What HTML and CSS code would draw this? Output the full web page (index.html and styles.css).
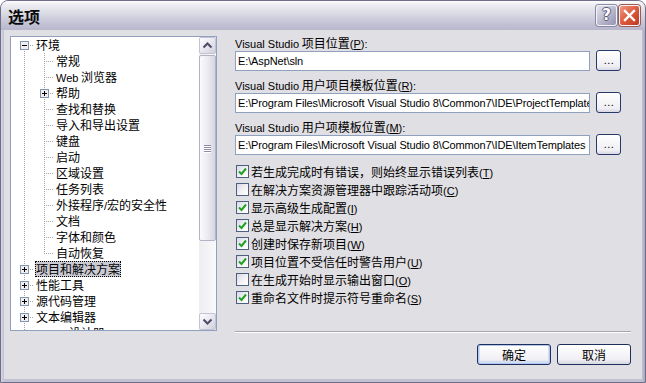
FILE: index.html
```html
<!DOCTYPE html>
<html lang="zh-CN">
<head>
<meta charset="utf-8">
<title>选项</title>
<link rel="stylesheet" href="styles.css">
</head>
<body>
<div class="window">
  <div class="titlebar">
    <span class="title">选项</span>
    <div class="caption-btns">
      <div class="cap-btn help"><span class="help-glyph">?</span></div>
      <div class="cap-btn close">
        <svg width="13" height="13" viewBox="0 0 13 13"><path d="M2 2L11 11M11 2L2 11" stroke="#fff" stroke-width="2.4" stroke-linecap="square"/></svg>
      </div>
    </div>
  </div>
  <div class="client">
    <div class="main">
      <div class="tree">
        <div class="tree-list">
          <div class="row"><span class="g g-first"><svg class="box" width="9" height="9" viewBox="0 0 9 9"><rect x=".5" y=".5" width="8" height="8" fill="#eeeef3" stroke="#8294ab"/><path d="M2 4.5h5" stroke="#000"/></svg></span><span class="lbl">环境</span></div>
          <div class="row"><span class="g g-line"></span><span class="g g-tee"></span><span class="lbl">常规</span></div>
          <div class="row"><span class="g g-line"></span><span class="g g-tee"></span><span class="lbl"><span class="lat">Web</span> 浏览器</span></div>
          <div class="row"><span class="g g-line"></span><span class="g g-tee"><svg class="box" width="9" height="9" viewBox="0 0 9 9"><rect x=".5" y=".5" width="8" height="8" fill="#eeeef3" stroke="#8294ab"/><path d="M2 4.5h5M4.5 2v5" stroke="#000"/></svg></span><span class="lbl">帮助</span></div>
          <div class="row"><span class="g g-line"></span><span class="g g-tee"></span><span class="lbl">查找和替换</span></div>
          <div class="row"><span class="g g-line"></span><span class="g g-tee"></span><span class="lbl">导入和导出设置</span></div>
          <div class="row"><span class="g g-line"></span><span class="g g-tee"></span><span class="lbl">键盘</span></div>
          <div class="row"><span class="g g-line"></span><span class="g g-tee"></span><span class="lbl">启动</span></div>
          <div class="row"><span class="g g-line"></span><span class="g g-tee"></span><span class="lbl">区域设置</span></div>
          <div class="row"><span class="g g-line"></span><span class="g g-tee"></span><span class="lbl">任务列表</span></div>
          <div class="row"><span class="g g-line"></span><span class="g g-tee"></span><span class="lbl">外接程序<span class="lat">/</span>宏的安全性</span></div>
          <div class="row"><span class="g g-line"></span><span class="g g-tee"></span><span class="lbl">文档</span></div>
          <div class="row"><span class="g g-line"></span><span class="g g-tee"></span><span class="lbl">字体和颜色</span></div>
          <div class="row"><span class="g g-line"></span><span class="g g-end"></span><span class="lbl">自动恢复</span></div>
          <div class="row"><span class="g g-tee"><svg class="box" width="9" height="9" viewBox="0 0 9 9"><rect x=".5" y=".5" width="8" height="8" fill="#eeeef3" stroke="#8294ab"/><path d="M2 4.5h5M4.5 2v5" stroke="#000"/></svg></span><span class="lbl selected">项目和解决方案</span></div>
          <div class="row"><span class="g g-tee"><svg class="box" width="9" height="9" viewBox="0 0 9 9"><rect x=".5" y=".5" width="8" height="8" fill="#eeeef3" stroke="#8294ab"/><path d="M2 4.5h5M4.5 2v5" stroke="#000"/></svg></span><span class="lbl">性能工具</span></div>
          <div class="row"><span class="g g-tee"><svg class="box" width="9" height="9" viewBox="0 0 9 9"><rect x=".5" y=".5" width="8" height="8" fill="#eeeef3" stroke="#8294ab"/><path d="M2 4.5h5M4.5 2v5" stroke="#000"/></svg></span><span class="lbl">源代码管理</span></div>
          <div class="row"><span class="g g-tee"><svg class="box" width="9" height="9" viewBox="0 0 9 9"><rect x=".5" y=".5" width="8" height="8" fill="#eeeef3" stroke="#8294ab"/><path d="M2 4.5h5M4.5 2v5" stroke="#000"/></svg></span><span class="lbl">文本编辑器</span></div>
          <div class="row"><span class="g g-tee"></span><span class="lbl"><span class="lat">HTML</span> 设计器</span></div>
        </div>
        <div class="vscroll">
          <div class="sb-btn"><svg width="15" height="15" viewBox="0 0 15 15"><path d="M3.5 9.5L7.5 5.5L11.5 9.5" fill="none" stroke="#4b4b68" stroke-width="2"/></svg></div>
          <div class="sb-track">
            <div class="sb-thumb"><div class="grip"><i></i><i></i><i></i><i></i></div></div>
          </div>
          <div class="sb-btn"><svg width="15" height="15" viewBox="0 0 15 15"><path d="M3.5 5.5L7.5 9.5L11.5 5.5" fill="none" stroke="#4b4b68" stroke-width="2"/></svg></div>
        </div>
      </div>
      <div class="panel">
        <div class="field-label"><span class="lat">Visual Studio</span> 项目位置<span class="lat">(<u>P</u>):</span></div>
        <div class="field-row"><div class="input lat">E:\AspNet\sln</div><div class="browse lat">...</div></div>
        <div class="field-label"><span class="lat">Visual Studio</span> 用户项目模板位置<span class="lat">(<u>R</u>):</span></div>
        <div class="field-row"><div class="input lat">E:\Program Files\Microsoft Visual Studio 8\Common7\IDE\ProjectTemplates</div><div class="browse lat">...</div></div>
        <div class="field-label"><span class="lat">Visual Studio</span> 用户项模板位置<span class="lat">(<u>M</u>):</span></div>
        <div class="field-row"><div class="input lat">E:\Program Files\Microsoft Visual Studio 8\Common7\IDE\ItemTemplates</div><div class="browse lat">...</div></div>
        <div class="checks">
          <div class="check"><span class="cb on"><svg width="11" height="11" viewBox="0 0 11 11"><path d="M2 5.5L4.5 8L9 2.5" fill="none" stroke="#21a121" stroke-width="2"/></svg></span><span>若生成完成时有错误，则始终显示错误列表<span class="lat">(<u>T</u>)</span></span></div>
          <div class="check"><span class="cb"></span><span>在解决方案资源管理器中跟踪活动项<span class="lat">(<u>C</u>)</span></span></div>
          <div class="check"><span class="cb on"><svg width="11" height="11" viewBox="0 0 11 11"><path d="M2 5.5L4.5 8L9 2.5" fill="none" stroke="#21a121" stroke-width="2"/></svg></span><span>显示高级生成配置<span class="lat">(<u>I</u>)</span></span></div>
          <div class="check"><span class="cb on"><svg width="11" height="11" viewBox="0 0 11 11"><path d="M2 5.5L4.5 8L9 2.5" fill="none" stroke="#21a121" stroke-width="2"/></svg></span><span>总是显示解决方案<span class="lat">(<u>H</u>)</span></span></div>
          <div class="check"><span class="cb on"><svg width="11" height="11" viewBox="0 0 11 11"><path d="M2 5.5L4.5 8L9 2.5" fill="none" stroke="#21a121" stroke-width="2"/></svg></span><span>创建时保存新项目<span class="lat">(<u>W</u>)</span></span></div>
          <div class="check"><span class="cb on"><svg width="11" height="11" viewBox="0 0 11 11"><path d="M2 5.5L4.5 8L9 2.5" fill="none" stroke="#21a121" stroke-width="2"/></svg></span><span>项目位置不受信任时警告用户<span class="lat">(<u>U</u>)</span></span></div>
          <div class="check"><span class="cb"></span><span>在生成开始时显示输出窗口<span class="lat">(<u>O</u>)</span></span></div>
          <div class="check"><span class="cb on"><svg width="11" height="11" viewBox="0 0 11 11"><path d="M2 5.5L4.5 8L9 2.5" fill="none" stroke="#21a121" stroke-width="2"/></svg></span><span>重命名文件时提示符号重命名<span class="lat">(<u>S</u>)</span></span></div>
        </div>
        <div class="separator"></div>
      </div>
    </div>
    <div class="footer">
      <div class="btn default">确定</div>
      <div class="btn">取消</div>
    </div>
  </div>
</div>
</body>
</html>
```

FILE: styles.css
```css
* { box-sizing: border-box; }
html, body { margin: 0; padding: 0; }
body {
  width: 646px;
  height: 383px;
  overflow: hidden;
  background: #ffffff;
  font-family: "Noto Sans CJK SC", "Liberation Sans", sans-serif;
  font-size: 12px;
  color: #000;
}
.lat {
  font-family: "Liberation Sans", "DejaVu Sans", sans-serif;
  font-size: 11px;
}
u { text-decoration: underline; text-underline-offset: 1px; }

.window {
  width: 646px;
  height: 383px;
  display: flex;
  flex-direction: column;
  border: 1px solid #6f6e88;
  border-radius: 8px 8px 0 0;
  background: linear-gradient(90deg, #d6d5e2, #c3c2d4 3px, #c3c2d4 calc(100% - 3px), #a9a8be);
  overflow: hidden;
}

/* title bar */
.titlebar {
  height: 29px;
  flex: none;
  display: flex;
  align-items: flex-start;
  justify-content: space-between;
  padding: 4px 5px 0 7px;
  background: linear-gradient(#fdfdfe 0%, #eeeef3 12%, #dcdce5 40%, #c8c7d8 70%, #b7b6cb 100%);
}
.title {
  font-size: 16px;
  font-weight: 700;
  line-height: 22px;
  color: #0a0a0a;
}
.caption-btns { display: flex; gap: 2px; }
.cap-btn {
  width: 21px;
  height: 21px;
  border: 1px solid #f4f4f8;
  border-radius: 3px;
  display: flex;
  align-items: center;
  justify-content: center;
}
.help {
  background: linear-gradient(135deg, #e4e4ee, #b3b2c9 60%, #9594b0);
  box-shadow: 0 0 0 1px #8a89a3;
}
.help-glyph {
  font-family: "DejaVu Sans", sans-serif;
  font-weight: 700;
  font-size: 15px;
  line-height: 15px;
  color: #fff;
  text-shadow: 1px 0 0 #5a5a78, -1px 0 0 #5a5a78, 0 1px 0 #5a5a78, 0 -1px 0 #5a5a78;
}
.close {
  background: linear-gradient(135deg, #f19a84, #dc5a3e 50%, #c0361c);
  box-shadow: 0 0 0 1px #9d5a52;
}

/* client */
.client {
  flex: 1;
  margin: 0 3px 3px;
  background: #e0dfe3;
  padding: 6px 11px 0 6px;
  display: flex;
  flex-direction: column;
}
.main {
  height: 297px;
  display: flex;
  gap: 18px;
}

/* tree */
.tree {
  width: 207px;
  height: 295px;
  flex: none;
  border: 1px solid #8fa1bf;
  background: #fff;
  display: flex;
}
.tree-list {
  flex: 1;
  overflow: hidden;
  padding-left: 3px;
}
.row {
  height: 16px;
  display: flex;
  align-items: flex-start;
  white-space: nowrap;
}
.g {
  width: 20px;
  height: 16px;
  flex: none;
  padding: 4px 0 0 6px;
  background-repeat: no-repeat;
}
.box { display: block; }
.g-line {
  background-image: repeating-linear-gradient(to bottom, #a3a3a3 0 1px, transparent 1px 2px);
  background-size: 1px 16px;
  background-position: 10px 0;
}
.g-tee {
  background-image:
    repeating-linear-gradient(to bottom, #a3a3a3 0 1px, transparent 1px 2px),
    repeating-linear-gradient(to right, #a3a3a3 0 1px, transparent 1px 2px);
  background-size: 1px 16px, 9px 1px;
  background-position: 10px 0, 12px 8px;
}
.g-end {
  background-image:
    repeating-linear-gradient(to bottom, #a3a3a3 0 1px, transparent 1px 2px),
    repeating-linear-gradient(to right, #a3a3a3 0 1px, transparent 1px 2px);
  background-size: 1px 9px, 9px 1px;
  background-position: 10px 0, 12px 8px;
}
.g-first {
  background-image:
    repeating-linear-gradient(to bottom, #a3a3a3 0 1px, transparent 1px 2px),
    repeating-linear-gradient(to right, #a3a3a3 0 1px, transparent 1px 2px);
  background-size: 1px 8px, 9px 1px;
  background-position: 10px 8px, 12px 8px;
}
.lbl {
  height: 16px;
  line-height: 16px;
  padding: 0 1px 0 1px;
  margin-left: 1px;
}
.lbl.selected {
  background: #cbcbd3;
  outline: 1px dotted #000;
  outline-offset: -1px;
}

/* scrollbar */
.vscroll {
  width: 17px;
  flex: none;
  display: flex;
  flex-direction: column;
  background: #f3f3f6;
}
.sb-btn {
  width: 17px;
  height: 17px;
  flex: none;
  border: 1px solid #c4c3d3;
  border-radius: 2px;
  background: linear-gradient(135deg, #fefeff, #e4e3ec 60%, #cfcedc);
  display: flex;
  align-items: center;
  justify-content: center;
}
.sb-track {
  flex: 1;
  padding-top: 1px;
  background: linear-gradient(90deg, #eeeef2, #f9f9fb);
}
.sb-thumb {
  height: 186px;
  border: 1px solid #b4b3c5;
  border-radius: 2px;
  background: linear-gradient(90deg, #fbfbfd, #e9e9f0 55%, #d6d5e2);
  display: flex;
  align-items: center;
  justify-content: center;
}
.grip { display: flex; flex-direction: column; gap: 1px; }
.grip i {
  display: block;
  width: 7px;
  height: 1px;
  background: #8d8ca6;
  box-shadow: 0 1px 0 #fff;
}

/* right panel */
.panel {
  flex: 1;
  display: flex;
  flex-direction: column;
}
.field-label {
  height: 15px;
  line-height: 14px;
  white-space: nowrap;
}
.field-row {
  width: 386px;
  display: flex;
  gap: 6px;
  margin-bottom: 7px;
  align-items: flex-start;
}
.input {
  width: 355px;
  height: 20px;
  flex: none;
  border: 1px solid #8fa1bf;
  background: #fff;
  padding: 0 2px;
  line-height: 18px;
  letter-spacing: -0.12px;
  white-space: nowrap;
  overflow: hidden;
  text-overflow: clip;
}
.browse {
  width: 25px;
  height: 21px;
  margin-top: -1px;
  flex: none;
  border: 1px solid #28386a;
  border-radius: 3px;
  background: linear-gradient(#ffffff, #efeff4 80%, #d9d8e3);
  text-align: center;
  line-height: 19px;
  letter-spacing: 0.5px;
  padding-left: 1px;
}

.checks { display: flex; flex-direction: column; }
.check {
  height: 18px;
  display: flex;
  align-items: center;
  white-space: nowrap;
}
.cb {
  width: 13px;
  height: 13px;
  flex: none;
  margin: 0 2px 0 1px;
  border: 1px solid #4f5f80;
  background: linear-gradient(135deg, #d8d8e2, #f5f5f8 60%, #ffffff);
  display: flex;
  align-items: center;
  justify-content: center;
}

.separator {
  margin-top: auto;
  height: 2px;
  border-top: 1px solid #a7a6ae;
  border-bottom: 1px solid #ffffff;
}

/* footer */
.footer {
  display: flex;
  justify-content: flex-end;
  gap: 6px;
  margin-top: 11px;
}
.btn {
  width: 74px;
  height: 21px;
  border: 1px solid #1f2f5c;
  border-radius: 3px;
  background: linear-gradient(#ffffff, #f0f0f5 75%, #d7d6e2);
  text-align: center;
  line-height: 19px;
}
.btn.default {
  box-shadow: inset 0 0 0 1px #b3c7ee, inset 0 -1px 0 2px #d3def5;
}
```
